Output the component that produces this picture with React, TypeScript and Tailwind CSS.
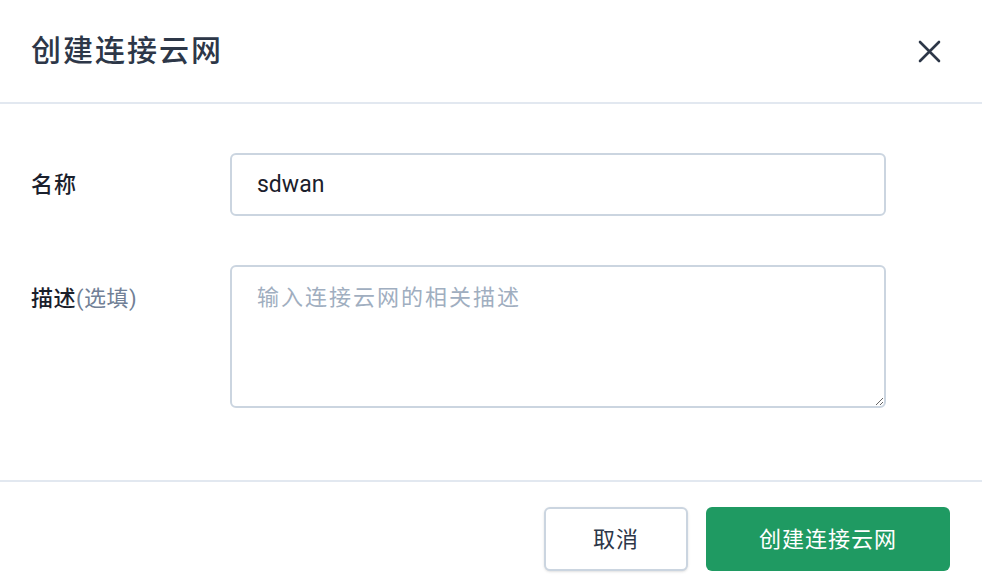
import React from "react";

export default function App() {
  const font = { fontFamily: 'Roboto, "Noto Sans CJK SC", "Noto Sans", sans-serif' };
  return (
    <div className="w-[982px] h-[586px] bg-white flex flex-col" style={font}>
      <div className="h-[104px] shrink-0 flex items-center justify-between pl-[31px] pr-[38px] border-b-2 border-[#e2e8f0]">
        <h1 className="text-[30px] leading-none font-medium text-[#2d3748] tracking-[2px] pb-[1px]">创建连接云网</h1>
        <button className="w-[30px] h-[30px] flex items-center justify-center text-[#2d3748]">
          <svg width="25" height="25" viewBox="0 0 25 25" fill="none" stroke="currentColor" strokeWidth="2.6" strokeLinecap="round">
            <path d="M3 3L22 22M22 3L3 22" />
          </svg>
        </button>
      </div>
      <div className="flex-1 flex flex-col pl-[31px] pr-[96px] pt-[49px] gap-[49px] border-b-2 border-[#e2e8f0]">
        <div className="flex items-center">
          <label className="w-[199px] text-[22px] font-medium text-[#1a202c] tracking-[1px]">名称</label>
          <input
            className="flex-1 h-[63px] border-2 border-[#cbd5e0] rounded-[6px] px-[25px] text-[23px] text-[#1a202c] outline-none"
            defaultValue="sdwan"
          />
        </div>
        <div className="flex items-start">
          <label className="w-[199px] text-[22px] text-[#1a202c] pt-[17px] tracking-[0.5px]">
            <span className="font-medium">描述</span>
            <span className="text-[#718096]">(选填)</span>
          </label>
          <textarea
            className="flex-1 h-[143px] border-2 border-[#cbd5e0] rounded-[6px] px-[25px] pt-[16px] text-[22px] leading-[30px] text-[#1a202c] outline-none placeholder:text-[#a0aec0] tracking-[2px]"
            placeholder="输入连接云网的相关描述"
          />
        </div>
      </div>
      <div className="h-[104px] shrink-0 flex items-start justify-end gap-[18px] pt-[25px] pr-[32px]">
        <button className="w-[144px] h-[64px] border-2 border-[#cbd5e0] rounded-[6px] bg-white text-[22px] text-[#2d3748] shadow-sm tracking-[1px]">
          取消
        </button>
        <button className="w-[244px] h-[64px] rounded-[6px] bg-[#1f9a62] text-[22px] text-white tracking-[1px]">
          创建连接云网
        </button>
      </div>
    </div>
  );
}
